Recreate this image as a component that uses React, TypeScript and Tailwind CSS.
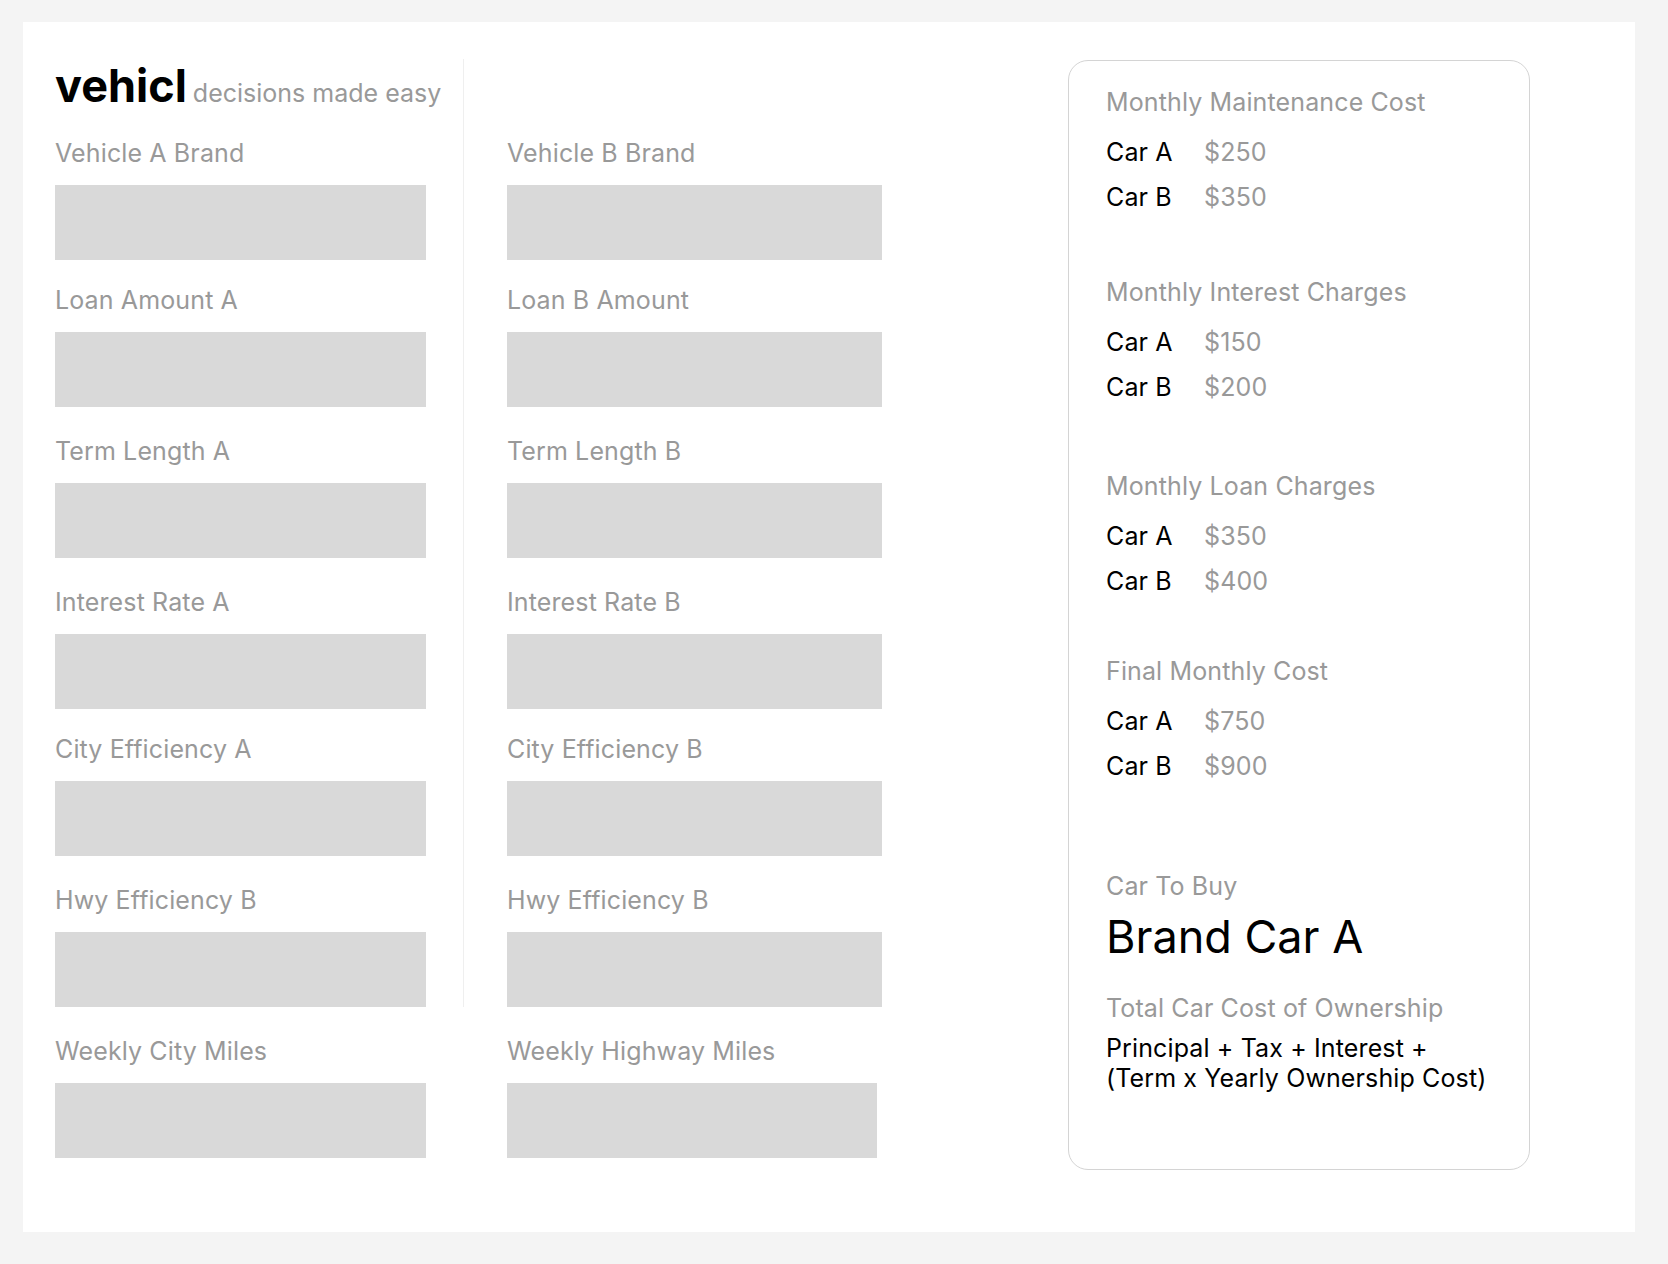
import React from 'react';

interface Field {
  label: string;
  gap: string; // space above the label
}

const FIELDS_A: Field[] = [
  { label: 'Vehicle A Brand', gap: 'mt-0' },
  { label: 'Loan Amount A', gap: 'mt-[24px]' },
  { label: 'Term Length A', gap: 'mt-[28px]' },
  { label: 'Interest Rate A', gap: 'mt-[28px]' },
  { label: 'City Efficiency A', gap: 'mt-[24px]' },
  { label: 'Hwy Efficiency B', gap: 'mt-[28px]' },
];

const FIELDS_B: Field[] = [
  { label: 'Vehicle B Brand', gap: 'mt-0' },
  { label: 'Loan B Amount', gap: 'mt-[24px]' },
  { label: 'Term Length B', gap: 'mt-[28px]' },
  { label: 'Interest Rate B', gap: 'mt-[28px]' },
  { label: 'City Efficiency B', gap: 'mt-[24px]' },
  { label: 'Hwy Efficiency B', gap: 'mt-[28px]' },
];

const SECTIONS = [
  { title: 'Monthly Maintenance Cost', a: '$250', b: '$350', gap: 'mt-0' },
  { title: 'Monthly Interest Charges', a: '$150', b: '$200', gap: 'mt-[63px]' },
  { title: 'Monthly Loan Charges', a: '$350', b: '$400', gap: 'mt-[67px]' },
  { title: 'Final Monthly Cost', a: '$750', b: '$900', gap: 'mt-[58px]' },
];

const InputField = ({ field, width }: { field: Field; width: string }) => (
  <div className={field.gap}>
    <div className="text-[25px] leading-[32px] tracking-[0.005em] text-[#999999]">{field.label}</div>
    <div className={`mt-[16px] h-[75px] bg-[#d9d9d9] ${width}`} />
  </div>
);

const CostRow = ({ car, value, gap }: { car: string; value: string; gap: string }) => (
  <div className={`flex text-[25px] leading-[32px] tracking-[0.005em] ${gap}`}>
    <span className="w-[98px] text-black">{car}</span>
    <span className="text-[#999999]">{value}</span>
  </div>
);

export default function App() {
  return (
    <div
      className="min-h-screen bg-[#f4f4f4] pt-[22px] pl-[23px] pb-[32px]"
      style={{ fontFamily: 'Inter, "Liberation Sans", sans-serif' }}
    >
      <div className="flex w-[1612px] h-[1210px] bg-white">
        {/* Inputs */}
        <div className="flex flex-col pt-[37px] pl-[32px]">
          <div className="flex">
            <div className="w-[409px] border-r border-[#efefef]">
              <div className="h-[78px] pt-[5px] flex items-baseline">
                <span className="text-[45px] leading-[44px] font-bold text-black">vehicl</span>
                <span className="ml-[6px] text-[25px] leading-[44px] text-[#999999]">decisions made easy</span>
              </div>
              {FIELDS_A.map((f) => (
                <InputField key={f.label} field={f} width="w-[371px]" />
              ))}
            </div>
            <div className="pl-[43px]">
              <div className="h-[78px]" />
              {FIELDS_B.map((f, i) => (
                <InputField key={f.label + i} field={f} width="w-[375px]" />
              ))}
            </div>
          </div>

          <div className="flex mt-[28px]">
            <div className="w-[452px]">
              <InputField field={{ label: 'Weekly City Miles', gap: 'mt-0' }} width="w-[371px]" />
            </div>
            <InputField field={{ label: 'Weekly Highway Miles', gap: 'mt-0' }} width="w-[370px]" />
          </div>
        </div>

        {/* Results card */}
        <div className="ml-[186px] mt-[38px] w-[462px] h-[1110px] border border-[#d4d4d4] rounded-[20px] pt-[25px] pl-[37px]">
          {SECTIONS.map((s) => (
            <div key={s.title} className={s.gap}>
              <div className="text-[25px] leading-[32px] tracking-[0.005em] text-[#999999]">{s.title}</div>
              <CostRow car="Car A" value={s.a} gap="mt-[18px]" />
              <CostRow car="Car B" value={s.b} gap="mt-[13px]" />
            </div>
          ))}

          <div className="mt-[88px] text-[25px] leading-[32px] tracking-[0.005em] text-[#999999]">Car To Buy</div>
          <div className="mt-[9px] text-[45px] leading-[52px] text-black">Brand Car A</div>
          <div className="mt-[29px] text-[25px] leading-[32px] tracking-[0.005em] text-[#999999]">
            Total Car Cost of Ownership
          </div>
          <div className="mt-[9px] text-[25px] leading-[30px] tracking-[0.005em] text-black">
            Principal + Tax + Interest +
            <br />
            (Term x Yearly Ownership Cost)
          </div>
        </div>
      </div>
    </div>
  );
}
